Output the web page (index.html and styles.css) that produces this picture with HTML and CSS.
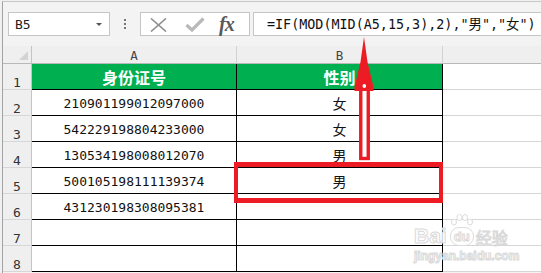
FILE: index.html
```html
<!DOCTYPE html>
<html lang="zh-CN">
<head>
    <meta charset="UTF-8">
    <title>身份证号判断性别</title>
    <link rel="stylesheet" href="styles.css">
</head>
<body>
    <div class="app">
        <div class="toolbar">
            <div class="namebox"><span>B5</span><span class="caret"></span></div>
            <div class="grip"><i></i><i></i><i></i></div>
            <div class="fbtns">
                <svg class="ico-x" width="17" height="14" viewBox="0 0 17 14"><path d="M1 0.5L16 13.5M16 0.5L1 13.5" stroke="#8e8e8e" stroke-width="1.6" fill="none"/></svg>
                <svg class="ico-ok" width="20" height="15" viewBox="0 0 20 15"><path d="M1.5 8L7 13L18.5 1.5" stroke="#b9b9b9" stroke-width="3.2" fill="none"/></svg>
                <span class="fx">fx</span>
            </div>
            <div class="formula">=IF(MOD(MID(A5,15,3),2),"男","女")</div>
        </div>
        <div class="sheet">
            <div class="hd corner"><span class="tri"></span></div>
            <div class="hd">A</div>
            <div class="hd">B</div>
            <div class="hd">C</div>

            <div class="rh">1</div>
            <div class="c g">身份证号</div>
            <div class="c g">性别</div>
            <div class="e"></div>

            <div class="rh">2</div>
            <div class="c">210901199012097000</div>
            <div class="c cn">女</div>
            <div class="e"></div>

            <div class="rh">3</div>
            <div class="c">542229198804233000</div>
            <div class="c cn">女</div>
            <div class="e"></div>

            <div class="rh">4</div>
            <div class="c">130534198008012070</div>
            <div class="c cn">男</div>
            <div class="e"></div>

            <div class="rh">5</div>
            <div class="c">500105198111139374</div>
            <div class="c cn">男</div>
            <div class="e"></div>

            <div class="rh">6</div>
            <div class="c">431230198308095381</div>
            <div class="c cn"></div>
            <div class="e"></div>

            <div class="rh">7</div>
            <div class="c"></div>
            <div class="c"></div>
            <div class="e"></div>

            <div class="rh">8</div>
            <div class="c"></div>
            <div class="c"></div>
            <div class="e"></div>
        </div>
    </div>

    <!-- annotations drawn over the sheet -->
    <div class="mark"></div>
    <svg class="arrow" width="541" height="273" viewBox="0 0 541 273">
        <rect x="360.75" y="88" width="7.5" height="70.5" fill="#fff" stroke="#ed1c24" stroke-width="3.4"/>
        <polygon points="364,37 367.5,62 373.5,87 373.5,91 354.5,91 354.5,87 360.5,62" fill="#ed1c24"/>
        <ellipse cx="364.3" cy="86" rx="1.8" ry="2" fill="#fff"/>
    </svg>

    <div class="watermark">
        <div class="wm-top">
            <span class="wm-bai">Bai</span>
            <span class="wm-paw">
                <svg width="24" height="12" viewBox="0 0 24 12"><g fill="#fff" stroke="#dcdcdc" stroke-width="1"><ellipse cx="4" cy="8" rx="2.5" ry="3"/><ellipse cx="9.5" cy="3.5" rx="2.5" ry="3"/><ellipse cx="15" cy="3.5" rx="2.5" ry="3"/><ellipse cx="20" cy="8" rx="2.5" ry="3"/></g></svg>
                <span class="wm-du">du</span>
            </span>
            <span class="wm-cn">经验</span>
        </div>
        <div class="wm-url">jingyan.baidu.com</div>
    </div>
</body>
</html>
```

FILE: styles.css
```css
body {
    margin: 0;
    width: 541px;
    height: 273px;
    overflow: hidden;
    position: relative;
    background: #f0f0f0;
    font-family: "DejaVu Sans Mono", "Noto Sans CJK SC", monospace;
    color: #000;
}
.app {
    margin: 1px 0 0 2px;
    height: 272px;
    border-left: 1px solid #a3a3a3;
    border-top: 1px solid #c8c8c8;
    background: #f3f3f3;
}
.toolbar {
    display: flex;
    align-items: flex-start;
    padding: 10px 0 10px 5px;
}
.namebox {
    box-sizing: border-box;
    width: 102px;
    height: 24px;
    border: 1px solid #c6c6c6;
    background: #fff;
    display: flex;
    align-items: center;
    justify-content: space-between;
    padding: 1px 7px 0 6px;
    font-size: 13px;
    color: #222;
}
.caret {
    width: 0;
    height: 0;
    border-left: 3px solid transparent;
    border-right: 3px solid transparent;
    border-top: 3px solid #555;
}
.grip {
    display: flex;
    flex-direction: column;
    gap: 2px;
    margin: 7px 0 0 14px;
}
.grip i {
    display: block;
    width: 2px;
    height: 2px;
    background: #777;
}
.fbtns {
    box-sizing: border-box;
    width: 110px;
    height: 24px;
    margin-left: 14px;
    border: 1px solid #c6c6c6;
    background: #fff;
    display: flex;
    align-items: center;
    padding-left: 9px;
}
.ico-x {
    margin-top: 1px;
}
.ico-ok {
    margin-left: 18px;
    margin-top: 1px;
}
.fx {
    margin-left: 14px;
    font-family: "Liberation Serif", serif;
    font-style: italic;
    font-weight: bold;
    font-size: 20px;
    color: #595959;
    line-height: 22px;
    letter-spacing: -1px;
}
.formula {
    box-sizing: border-box;
    flex: 1;
    height: 24px;
    margin: 0 -4px 0 3px;
    border: 1px solid #c6c6c6;
    background: #fff;
    padding-left: 13px;
    font-size: 13.4px;
    line-height: 23px;
    white-space: nowrap;
    color: #111;
}
.sheet {
    display: grid;
    grid-template-columns: 29px 205px 206px 206px;
    grid-template-rows: 18px repeat(8, 26px);
}
.sheet > div {
    box-sizing: border-box;
    display: flex;
    align-items: center;
    justify-content: center;
    overflow: hidden;
    white-space: nowrap;
}
.hd {
    background: #efefef;
    border-right: 1px solid #d2d2d2;
    border-bottom: 1px solid #b8b8b8;
    font-size: 12.5px;
    color: #444;
    padding-top: 2px;
}
.corner {
    position: relative;
    border-right-color: #c4c4c4;
}
.tri {
    position: absolute;
    right: 3px;
    bottom: 3px;
    width: 0;
    height: 0;
    border-left: 9px solid transparent;
    border-bottom: 9px solid #d3d3d3;
}
.rh {
    background: #efefef;
    border-right: 1px solid #c4c4c4;
    border-bottom: 1px solid #d6d6d6;
    font-size: 13px;
    color: #333;
    line-height: 12px;
}
.sheet > .rh {
    align-items: flex-end;
}
.c {
    background: #fff;
    border-right: 1px solid #000;
    border-bottom: 1px solid #000;
    font-size: 13px;
    padding-top: 2px;
    color: #111;
}
.cn {
    font-family: "Noto Sans CJK SC", sans-serif;
    font-size: 14px;
    padding-top: 1px;
}
.g {
    background: #00b050;
    color: #fff;
    font-family: "Noto Sans CJK SC", sans-serif;
    font-weight: bold;
    font-size: 16px;
    padding-top: 0;
}
.e {
    background: #fff;
    border-bottom: 1px solid #d6d6d6;
}
.mark {
    position: absolute;
    left: 234px;
    top: 162px;
    width: 209px;
    height: 41px;
    box-sizing: border-box;
    border-style: solid;
    border-color: #ed1c24;
    border-width: 5px 4px;
}
.arrow {
    position: absolute;
    left: 0;
    top: 0;
    pointer-events: none;
}
.watermark {
    position: absolute;
    left: 414px;
    top: 212px;
    color: #fff;
    -webkit-text-stroke: 1px #d9d9d9;
}
.wm-top {
    display: flex;
    align-items: flex-end;
    height: 34px;
}
.wm-bai {
    font-family: "Liberation Sans", sans-serif;
    font-weight: bold;
    font-size: 21px;
    line-height: 20px;
}
.wm-paw {
    display: flex;
    flex-direction: column;
    align-items: center;
    margin-left: 3px;
}
.wm-du {
    font-family: "Liberation Sans", sans-serif;
    font-weight: bold;
    font-size: 13px;
    line-height: 17px;
    padding: 0 3px;
    border: 1px solid #dcdcdc;
    border-radius: 9px;
    margin-top: 1px;
}
.wm-cn {
    font-family: "Noto Sans CJK SC", sans-serif;
    font-size: 16px;
    line-height: 18px;
    margin-left: 2px;
}
.wm-url {
    font-family: "Liberation Sans", sans-serif;
    font-weight: bold;
    font-size: 12px;
    margin-top: 3px;
}
```
